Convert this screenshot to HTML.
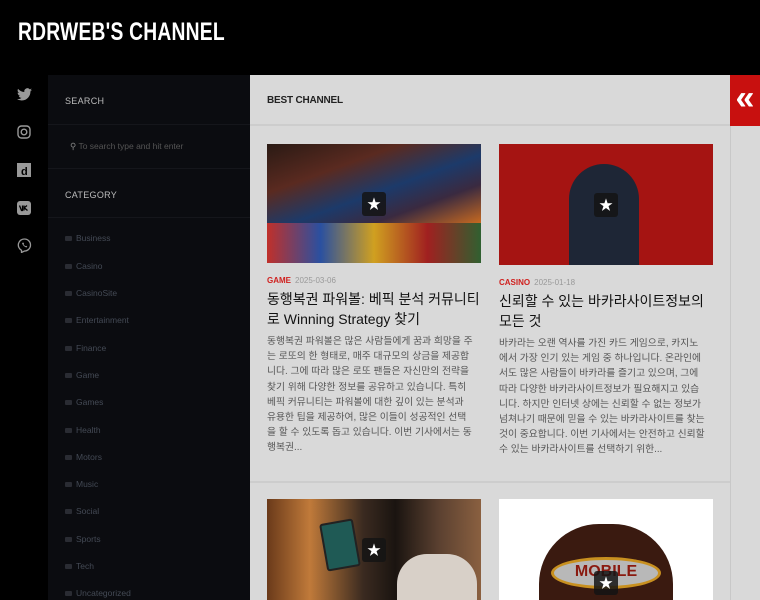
<!DOCTYPE html>
<html><head><meta charset="utf-8"><style>
*{margin:0;padding:0;box-sizing:border-box}
body{width:760px;height:600px;overflow:hidden;background:#000;font-family:"Liberation Sans","Noto Sans CJK KR",sans-serif;position:relative}
.title{position:absolute;left:18px;top:18px;color:#fff;font-weight:bold;font-size:25px;transform:scaleX(.77);transform-origin:left;white-space:nowrap;letter-spacing:.3px}
.side{position:absolute;left:48px;top:75px;width:202px;height:525px;background:#0b0c10}
.side .h{height:50px;border-bottom:1px solid #15161b;color:#bbb;font-size:9px;padding:21px 0 0 17px;letter-spacing:.3px}
.side .s{height:43px;color:#555;font-size:8.5px;padding:16px 0 0 22px}
.side .cat{position:absolute;left:17px;color:#444a55;font-size:8.5px}
.side .cat i{display:inline-block;width:7px;height:5px;background:#2a2c33;margin-right:4px;border-radius:1px}
.ic{position:absolute;left:17px}
.main{position:absolute;left:250px;top:75px;width:480px;height:525px;background:#d9d9d9}
.bar{height:51px;border-bottom:2px solid #cdcdcd;font-size:10px;font-weight:bold;color:#222;padding:20px 0 0 17px;letter-spacing:-.2px}
.right{position:absolute;left:730px;top:75px;width:30px;height:525px;background:#d9d9d9;border-left:1px solid #c8c8c8}
.red{position:absolute;left:730px;top:75px;width:30px;height:51px;background:#c8100f;color:#fff;font-size:34px;font-weight:bold;line-height:46px;text-align:center}
.img{position:absolute;width:214px;overflow:hidden}
.star{position:absolute;left:50%;top:50%;width:24px;height:24px;margin:-12px 0 0 -12px;background:rgba(20,20,20,.85);border-radius:3px;color:#fff;font-size:14px;line-height:24px;text-align:center}
.meta{position:absolute;font-size:8px;font-weight:bold;color:#d0201e}
.meta span{color:#999;font-weight:normal;margin-left:4px}
.t{position:absolute;font-size:14px;line-height:20px;color:#111;white-space:nowrap}
.ex{position:absolute;font-size:9.8px;line-height:15.2px;color:#555;white-space:nowrap}
.sep{position:absolute;left:250px;top:481px;width:480px;height:2px;background:#cdcdcd}
</style></head><body>
<div class="title">RDRWEB'S CHANNEL</div>

<svg class="ic" style="top:88px" width="15" height="13" viewBox="0 0 24 20"><path fill="#999" d="M24 2.4a10 10 0 0 1-2.8.8A5 5 0 0 0 23.3.4a10 10 0 0 1-3.1 1.2A4.9 4.9 0 0 0 11.8 6 14 14 0 0 1 1.7.9a4.9 4.9 0 0 0 1.5 6.6 4.9 4.9 0 0 1-2.2-.6 4.9 4.9 0 0 0 3.9 4.9 5 5 0 0 1-2.2.1 4.9 4.9 0 0 0 4.6 3.4A9.9 9.9 0 0 1 0 17.3 14 14 0 0 0 7.5 19.5c9 0 14-7.5 14-14v-.6A10 10 0 0 0 24 2.4z"/></svg>
<svg class="ic" style="top:125px" width="14" height="14" viewBox="0 0 14 14"><rect x="1" y="1" width="12" height="12" rx="3.5" fill="none" stroke="#999" stroke-width="1.4"/><circle cx="7" cy="7" r="2.8" fill="none" stroke="#999" stroke-width="1.4"/></svg>
<svg class="ic" style="top:163px" width="14" height="14" viewBox="0 0 14 14"><rect width="14" height="14" fill="#999"/><text x="4" y="12" font-size="11" font-weight="bold" fill="#000" font-family="Liberation Sans">d</text></svg>
<svg class="ic" style="top:201px" width="14" height="14" viewBox="0 0 14 14"><rect width="14" height="14" rx="3" fill="#999"/><path d="M2.5 4.5l2 5h1v-5M7 4.5v5M7 7l3-2.5M7.5 7l3 2.5" stroke="#000" stroke-width="1.3" fill="none"/></svg>
<svg class="ic" style="top:238px" width="15" height="15" viewBox="0 0 15 15"><path d="M7.5 1a6 6 0 0 1 0 12l-3 1.5v-2.2A6 6 0 0 1 7.5 1z" fill="none" stroke="#999" stroke-width="1.3"/><path d="M5 5c.5 2 2.5 4 4.5 4.5l.8-1-1.2-.8-.6.5c-.8-.4-1.5-1.1-1.9-1.9l.5-.6-.8-1.2z" fill="#999"/></svg>

<div class="side">
<div class="h">SEARCH</div>
<div class="s"><span style="color:#888">&#9906;</span> To search type and hit enter</div>
<div class="h" style="border-top:1px solid #15161b">CATEGORY</div>
<div class="cat" style="top:158px"><i></i>Business</div>
<div class="cat" style="top:186px"><i></i>Casino</div>
<div class="cat" style="top:213px"><i></i>CasinoSite</div>
<div class="cat" style="top:240px"><i></i>Entertainment</div>
<div class="cat" style="top:268px"><i></i>Finance</div>
<div class="cat" style="top:295px"><i></i>Game</div>
<div class="cat" style="top:322px"><i></i>Games</div>
<div class="cat" style="top:350px"><i></i>Health</div>
<div class="cat" style="top:377px"><i></i>Motors</div>
<div class="cat" style="top:404px"><i></i>Music</div>
<div class="cat" style="top:431px"><i></i>Social</div>
<div class="cat" style="top:459px"><i></i>Sports</div>
<div class="cat" style="top:486px"><i></i>Tech</div>
<div class="cat" style="top:513px"><i></i>Uncategorized</div>
</div>

<div class="main"><div class="bar">BEST CHANNEL</div></div>
<div class="right"></div>
<div class="red">&laquo;</div>

<div class="img" style="left:267px;top:144px;height:119px;background:linear-gradient(160deg,#2a1a14 0%,#5a2a20 25%,#1c3a6a 45%,#3a2a40 60%,#c86a20 80%,#f0a040 100%)"><div style="position:absolute;left:0;right:0;bottom:0;height:40px;background:linear-gradient(90deg,#c0302a,#2a50a0,#d0a020,#a02020,#306030)"></div><div class="star">&#9733;</div></div>
<div class="img" style="left:499px;top:144px;height:121px;background:#a51412"><div style="position:absolute;left:70px;top:20px;width:70px;height:101px;background:#1e2636;border-radius:35px 35px 0 0"></div><div class="star">&#9733;</div></div>

<div class="meta" style="left:267px;top:276px">GAME<span>2025-03-06</span></div>
<div class="meta" style="left:499px;top:278px">CASINO<span>2025-01-18</span></div>
<div class="t" style="left:267px;top:289px">동행복권 파워볼: 베픽 분석 커뮤니티<br>로 Winning Strategy 찾기</div>
<div class="t" style="left:499px;top:291px">신뢰할 수 있는 바카라사이트정보의<br>모든 것</div>
<div class="ex" style="left:267px;top:334px">동행복권 파워볼은 많은 사람들에게 꿈과 희망을 주<br>는 로또의 한 형태로, 매주 대규모의 상금을 제공합<br>니다. 그에 따라 많은 로또 팬들은 자신만의 전략을<br>찾기 위해 다양한 정보를 공유하고 있습니다. 특히<br>베픽 커뮤니티는 파워볼에 대한 깊이 있는 분석과<br>유용한 팁을 제공하여, 많은 이들이 성공적인 선택<br>을 할 수 있도록 돕고 있습니다. 이번 기사에서는 동<br>행복권...</div>
<div class="ex" style="left:499px;top:336px">바카라는 오랜 역사를 가진 카드 게임으로, 카지노<br>에서 가장 인기 있는 게임 중 하나입니다. 온라인에<br>서도 많은 사람들이 바카라를 즐기고 있으며, 그에<br>따라 다양한 바카라사이트정보가 필요해지고 있습<br>니다. 하지만 인터넷 상에는 신뢰할 수 없는 정보가<br>넘쳐나기 때문에 믿을 수 있는 바카라사이트를 찾는<br>것이 중요합니다. 이번 기사에서는 안전하고 신뢰할<br>수 있는 바카라사이트를 선택하기 위한...</div>

<div class="sep"></div>
<div class="img" style="left:267px;top:499px;height:101px;background:linear-gradient(90deg,#6a3a1a 0%,#c07a3a 20%,#3a2a20 45%,#1a1410 60%,#5a4030 80%,#8a6040 100%)"><div style="position:absolute;left:56px;top:22px;width:34px;height:48px;background:#1f5a55;border:2px solid #222;border-radius:3px;transform:rotate(-10deg)"></div><div style="position:absolute;left:130px;top:55px;width:80px;height:50px;background:#d8d0c8;border-radius:30px 30px 0 0"></div><div class="star">&#9733;</div></div>
<div class="img" style="left:499px;top:499px;height:101px;background:#fff"><div style="position:absolute;left:40px;top:25px;width:134px;height:76px;border-radius:60px 60px 0 0;background:#3a1a10"></div><div style="position:absolute;left:52px;top:58px;width:110px;height:32px;border-radius:50%;background:#b8b8b8;border:3px solid #c89020"></div><div style="position:absolute;left:60px;top:64px;width:94px;text-align:center;font:bold 16px 'Liberation Sans';color:#8a1a10">MOBILE</div><div class="star" style="top:83%">&#9733;</div></div>
</body></html>
